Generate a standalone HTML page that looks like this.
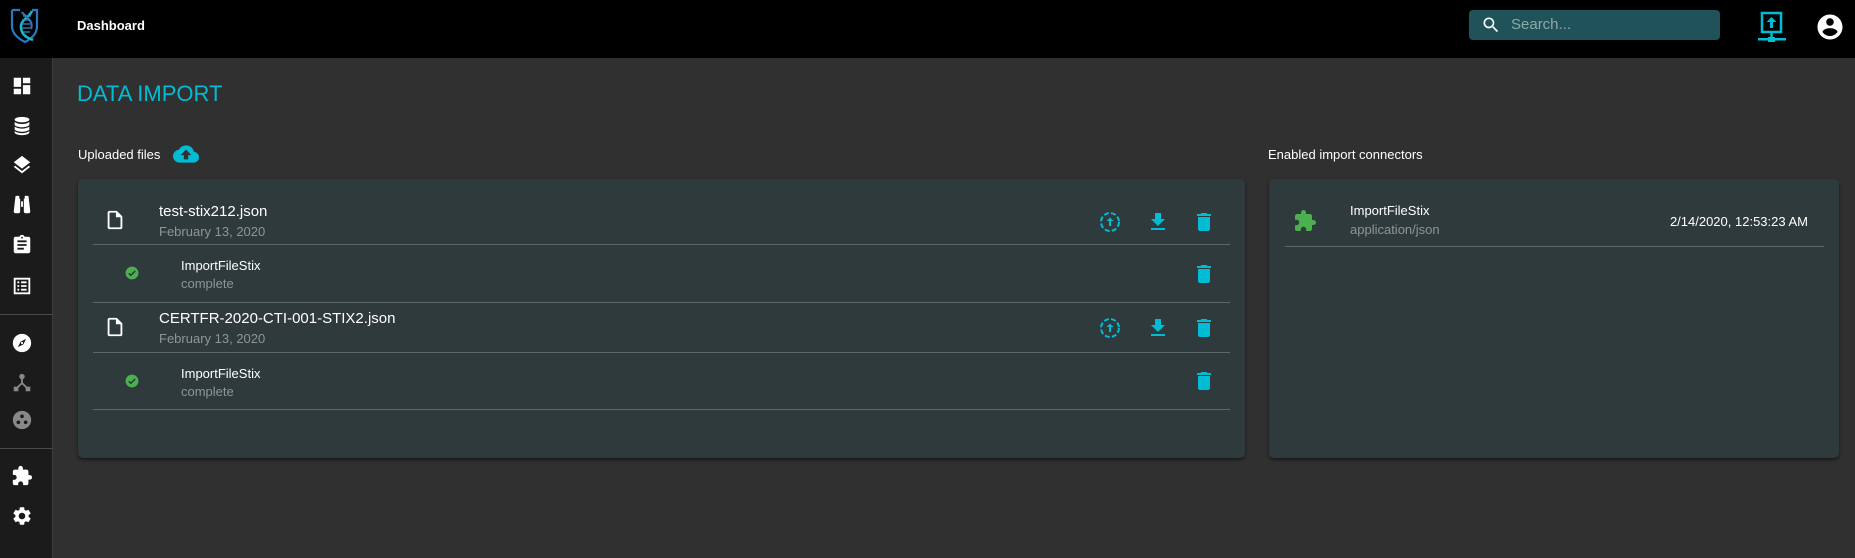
<!DOCTYPE html>
<html><head><meta charset="utf-8"><style>
*{margin:0;padding:0;box-sizing:border-box}
body{width:1855px;height:558px;overflow:hidden;background:#303030;font-family:"Liberation Sans",Arial,sans-serif;position:relative;color:#fff}
.a{position:absolute}
.hdr{left:0;top:0;width:1855px;height:58px;background:#000}
.side{left:0;top:58px;width:53px;height:500px;background:#1b1b1b;border-right:1px solid #3c3c3c}
.card{background:#2f3a3c;border-radius:5px;box-shadow:0 2px 3px rgba(0,0,0,.5)}
.hr{height:1px;background:#5e6668}
.t15{font-size:15px;color:#fff}
.t13{font-size:13px;color:#fff}
.g{color:#8e9597}
svg{position:absolute;display:block}
</style></head><body>
<div class="a hdr"></div>
<svg style="left:10px;top:8px" width="30" height="36" viewBox="0 0 30 36"><path d="M2 2h8M22 2h5v16c0 8-6 13-12 16C9 31 2 26 2 18V2" fill="none" stroke="#2a78c0" stroke-width="2.2"/><path d="M22 3c-3 7-12 9-11 17s7 10 12 12" fill="none" stroke="#1fb3c8" stroke-width="2.6"/><path d="M12 4c3 5 12 8 9 17" fill="none" stroke="#3a6cb4" stroke-width="2.2"/><path d="M13 8h8M12 12h8M12 16h8M12 20h8M13 24h7" stroke="#2a8fc8" stroke-width="1.2"/></svg>
<div class="a" style="left:77px;top:18px;font-size:13px;font-weight:bold">Dashboard</div>
<div class="a" style="left:1469px;top:10px;width:251px;height:30px;background:#1f5359;border-radius:4px"></div>
<svg style="left:1481px;top:15px" width="20" height="20" viewBox="0 0 24 24"><path fill="#fff" d="M15.5 14h-.79l-.28-.27A6.47 6.47 0 0016 9.5 6.5 6.5 0 109.5 16c1.61 0 3.09-.59 4.230-1.57l.27.28v.79l5 4.99L20.49 19l-4.99-5zm-6 0C7.01 14 5 11.99 5 9.5S7.01 5 9.5 5 14 7.010 14 9.5 11.99 14 9.5 14z"/></svg>
<div class="a" style="left:1511px;top:16px;font-size:15px;color:#8fa8aa">Search...</div>
<svg style="left:1756px;top:11px" width="32" height="34" viewBox="0 0 32 34"><rect x="6" y="2" width="19" height="19" fill="none" stroke="#00bcd4" stroke-width="2.5"/><path d="M15.5 6l-5 5h3.5v6h3v-6h3.5z" fill="#00bcd4"/><rect x="14.3" y="21" width="2.5" height="7" fill="#00bcd4"/><rect x="2" y="27" width="28" height="2.5" fill="#00bcd4"/><rect x="12" y="26" width="7" height="5" fill="#00bcd4"/></svg>
<svg style="left:1815px;top:12px" width="30" height="30" viewBox="0 0 24 24"><path fill="#fff" d="M12 2C6.48 2 2 6.48 2 12s4.48 10 10 10 10-4.48 10-10S17.52 2 12 2zm0 3c1.66 0 3 1.34 3 3s-1.34 3-3 3-3-1.34-3-3 1.34-3 3-3zm0 14.2c-2.5 0-4.71-1.28-6-3.220.03-1.99 4-3.08 6-3.08 1.99 0 5.97 1.09 6 3.08-1.29 1.94-3.5 3.22-6 3.22z"/></svg>

<div class="a side"></div>
<svg style="left:11px;top:75px" width="22" height="22" viewBox="0 0 24 24"><path fill="#fff" d="M3 13h8V3H3v10zm0 8h8v-6H3v6zm10 0h8V11h-8v10zm0-18v6h8V3h-8z"/></svg>
<svg style="left:11px;top:115px" width="22" height="22" viewBox="0 0 24 24"><ellipse cx="12" cy="5" rx="8" ry="3" fill="#fff"/><path fill="#fff" d="M4 7.5c1.5 1.5 4.5 2.3 8 2.3s6.5-.8 8-2.3V11c-1.5 1.5-4.5 2.3-8 2.3S5.5 12.5 4 11zm0 5c1.5 1.5 4.5 2.3 8 2.3s6.5-.8 8-2.3V16c-1.5 1.5-4.5 2.3-8 2.3S5.5 17.5 4 16zm0 5c1.5 1.5 4.5 2.3 8 2.3s6.5-.8 8-2.3V19c0 1.7-3.6 3-8 3s-8-1.3-8-3z"/></svg>
<svg style="left:11px;top:154px" width="22" height="22" viewBox="0 0 24 24"><path fill="#fff" d="M11.99 18.54l-7.37-5.73L3 14.07l9 7 9-7-1.63-1.27-7.38 5.74zM12 16l7.36-5.73L21 9l-9-7-9 7 1.63 1.27L12 16z"/></svg>
<svg style="left:11px;top:194px" width="22" height="22" viewBox="0 0 24 24"><path fill="#fff" d="M5 2h4v3h1v14a2 2 0 01-2 2H5a2 2 0 01-2-2l1-9zm10 0h4l1 8 1 9a2 2 0 01-2 2h-3a2 2 0 01-2-2V5h1zM11 8h2v6h-2z"/></svg>
<svg style="left:11px;top:234px" width="22" height="22" viewBox="0 0 24 24"><path fill="#fff" d="M19 3h-4.18C14.4 1.84 13.3 1 12 1s-2.4.84-2.82 2H5c-1.1 0-2 .9-2 2v14c0 1.1.9 2 2 2h14c1.1 0 2-.9 2-2V5c0-1.1-.9-2-2-2zm-7 0c.55 0 1 .45 1 1s-.45 1-1 1-1-.45-1-1 .45-1 1-1zm2 14H7v-2h7v2zm3-4H7v-2h10v2zm0-4H7V7h10v2z"/></svg>
<svg style="left:11px;top:275px" width="22" height="22" viewBox="0 0 24 24"><path fill="#fff" d="M3 3h18v18H3zm2 2v14h14V5zm2 2h2v2H7zm4 0h6v2h-6zm-4 4h2v2H7zm4 0h6v2h-6zm-4 4h2v2H7zm4 0h6v2h-6z"/></svg>
<div class="a" style="left:0;top:314px;width:53px;height:1px;background:#4a4a4a"></div>
<svg style="left:11px;top:332px" width="22" height="22" viewBox="0 0 24 24"><circle cx="12" cy="12" r="10" fill="#fff"/><path d="M16.5 7.5L13.5 13.5 7.5 16.5 10.5 10.5z" fill="#1b1b1b"/><circle cx="12" cy="12" r="1.2" fill="#fff"/></svg>
<svg style="left:11px;top:372px" width="22" height="22" viewBox="0 0 24 24"><circle cx="12" cy="5" r="3" fill="#888"/><path d="M12 7v5M12 12l-6 6M12 12l6 6" stroke="#888" stroke-width="2"/><rect x="3" y="16" width="5" height="5" fill="#888"/><rect x="16" y="16" width="5" height="5" fill="#888"/></svg>
<svg style="left:11px;top:409px" width="22" height="22" viewBox="0 0 24 24"><circle cx="12" cy="12" r="10" fill="#888"/><circle cx="12" cy="8" r="2" fill="#1b1b1b"/><circle cx="8" cy="14.5" r="2" fill="#1b1b1b"/><circle cx="16" cy="14.5" r="2" fill="#1b1b1b"/></svg>
<div class="a" style="left:0;top:448px;width:53px;height:1px;background:#4a4a4a"></div>
<svg style="left:11px;top:465px" width="22" height="22" viewBox="0 0 24 24"><path fill="#fff" d="M20.5 11H19V7c0-1.1-.9-2-2-2h-4V3.5a2.5 2.5 0 00-5 0V5H4c-1.1 0-1.99.9-1.99 2v3.8H3.5c1.49 0 2.7 1.21 2.7 2.7s-1.21 2.7-2.7 2.7H2V20c0 1.1.9 2 2 2h3.8v-1.5c0-1.49 1.21-2.7 2.7-2.7 1.49 0 2.7 1.21 2.7 2.7V22H17c1.1 0 2-.9 2-2v-4h1.5a2.5 2.5 0 000-5z"/></svg>
<svg style="left:11px;top:505px" width="22" height="22" viewBox="0 0 24 24"><path fill="#fff" d="M19.14 12.94c.04-.3.06-.61.06-.94 0-.32-.02-.64-.07-.94l2.03-1.58a.49.49 0 00.12-.61l-1.92-3.32a.488.488 0 00-.59-.22l-2.39.96c-.5-.38-1.03-.7-1.62-.94l-.36-2.54a.484.484 0 00-.48-.41h-3.84c-.24 0-.43.17-.47.41l-.36 2.54c-.59.24-1.13.57-1.62.94l-2.39-.96c-.22-.08-.47 0-.59.22L2.74 8.87c-.12.21-.08.47.12.61l2.03 1.58c-.05.3-.09.63-.09.94s.02.64.07.94l-2.03 1.58a.49.49 0 00-.12.61l1.92 3.32c.12.22.37.29.59.22l2.39-.96c.5.38 1.03.7 1.62.94l.36 2.54c.05.24.24.41.48.41h3.84c.24 0 .44-.17.47-.41l.36-2.54c.59-.24 1.13-.56 1.62-.94l2.39.96c.22.08.47 0 .59-.22l1.92-3.32c.12-.22.07-.47-.12-.61l-2.01-1.58zM12 15.6c-1.98 0-3.6-1.62-3.6-3.6s1.62-3.6 3.6-3.6 3.6 1.62 3.6 3.6-1.62 3.6-3.6 3.6z"/></svg>

<div class="a" style="left:77px;top:81px;font-size:22px;color:#00bcd4">DATA IMPORT</div>
<div class="a t13" style="left:78px;top:147px">Uploaded files</div>
<svg style="left:173px;top:143px" width="26" height="22" viewBox="0 0 24 20"><path fill="#00bcd4" d="M19.35 8.04A7.49 7.49 0 0012 2C9.11 2 6.6 3.64 5.35 6.04A5.994 5.994 0 000 12c0 3.31 2.69 6 6 6h13c2.76 0 5-2.24 5-5 0-2.64-2.05-4.78-4.65-4.96zM14 11v4h-4v-4H7l5-5 5 5h-3z"/></svg>
<div class="a t13" style="left:1268px;top:147px">Enabled import connectors</div>

<div class="a card" style="left:78px;top:179px;width:1167px;height:279px"></div>
<div class="a card" style="left:1269px;top:179px;width:570px;height:279px"></div>

<svg style="left:104px;top:209px" width="22" height="22" viewBox="0 0 24 24"><path fill="#fff" d="M14 2H6c-1.1 0-2 .9-2 2v16c0 1.1.9 2 2 2h12c1.1 0 2-.9 2-2V8l-6-6zM6 20V4h7v5h5v11H6z"/></svg>
<div class="a t15" style="left:159px;top:203px">test-stix212.json</div>
<div class="a t13 g" style="left:159px;top:224px">February 13, 2020</div>
<div class="a hr" style="left:93px;top:244px;width:1137px"></div>
<svg style="left:125px;top:266px" width="14" height="14" viewBox="0 0 24 24"><circle cx="12" cy="12" r="11" fill="#4caf50"/><path d="M6.5 12.5l3.5 3.5 7.5-7.5" stroke="#2f3a3c" stroke-width="2.6" fill="none"/></svg>
<div class="a t13" style="left:181px;top:258px">ImportFileStix</div>
<div class="a t13 g" style="left:181px;top:276px">complete</div>
<div class="a hr" style="left:93px;top:302px;width:1137px"></div>
<svg style="left:104px;top:316px" width="22" height="22" viewBox="0 0 24 24"><path fill="#fff" d="M14 2H6c-1.1 0-2 .9-2 2v16c0 1.1.9 2 2 2h12c1.1 0 2-.9 2-2V8l-6-6zM6 20V4h7v5h5v11H6z"/></svg>
<div class="a t15" style="left:159px;top:310px">CERTFR-2020-CTI-001-STIX2.json</div>
<div class="a t13 g" style="left:159px;top:331px">February 13, 2020</div>
<div class="a hr" style="left:93px;top:352px;width:1137px"></div>
<svg style="left:125px;top:374px" width="14" height="14" viewBox="0 0 24 24"><circle cx="12" cy="12" r="11" fill="#4caf50"/><path d="M6.5 12.5l3.5 3.5 7.5-7.5" stroke="#2f3a3c" stroke-width="2.6" fill="none"/></svg>
<div class="a t13" style="left:181px;top:366px">ImportFileStix</div>
<div class="a t13 g" style="left:181px;top:384px">complete</div>
<div class="a hr" style="left:93px;top:409px;width:1137px"></div>

<svg style="left:1098px;top:210px" width="24" height="24" viewBox="0 0 24 24"><circle cx="12" cy="12" r="9" fill="none" stroke="#00bcd4" stroke-width="2" stroke-dasharray="5 2.2"/><path d="M12 7.5l-3.5 3.5h2.5v5h2v-5h2.5z" fill="#00bcd4"/></svg>
<svg style="left:1146px;top:210px" width="24" height="24" viewBox="0 0 24 24"><path fill="#00bcd4" d="M19 9h-4V3H9v6H5l7 7 7-7zM5 18v2h14v-2H5z"/></svg>
<svg style="left:1192px;top:210px" width="24" height="24" viewBox="0 0 24 24"><path fill="#00bcd4" d="M6 19c0 1.1.9 2 2 2h8c1.1 0 2-.9 2-2V7H6v12zM19 4h-3.5l-1-1h-5l-1 1H5v2h14V4z"/></svg>
<svg style="left:1192px;top:262px" width="24" height="24" viewBox="0 0 24 24"><path fill="#00bcd4" d="M6 19c0 1.1.9 2 2 2h8c1.1 0 2-.9 2-2V7H6v12zM19 4h-3.5l-1-1h-5l-1 1H5v2h14V4z"/></svg>
<svg style="left:1098px;top:316px" width="24" height="24" viewBox="0 0 24 24"><circle cx="12" cy="12" r="9" fill="none" stroke="#00bcd4" stroke-width="2" stroke-dasharray="5 2.2"/><path d="M12 7.5l-3.5 3.5h2.5v5h2v-5h2.5z" fill="#00bcd4"/></svg>
<svg style="left:1146px;top:316px" width="24" height="24" viewBox="0 0 24 24"><path fill="#00bcd4" d="M19 9h-4V3H9v6H5l7 7 7-7zM5 18v2h14v-2H5z"/></svg>
<svg style="left:1192px;top:316px" width="24" height="24" viewBox="0 0 24 24"><path fill="#00bcd4" d="M6 19c0 1.1.9 2 2 2h8c1.1 0 2-.9 2-2V7H6v12zM19 4h-3.5l-1-1h-5l-1 1H5v2h14V4z"/></svg>
<svg style="left:1192px;top:369px" width="24" height="24" viewBox="0 0 24 24"><path fill="#00bcd4" d="M6 19c0 1.1.9 2 2 2h8c1.1 0 2-.9 2-2V7H6v12zM19 4h-3.5l-1-1h-5l-1 1H5v2h14V4z"/></svg>

<svg style="left:1293px;top:209px" width="24" height="24" viewBox="0 0 24 24"><path fill="#4caf50" d="M20.5 11H19V7c0-1.1-.9-2-2-2h-4V3.5a2.5 2.5 0 00-5 0V5H4c-1.1 0-1.99.9-1.99 2v3.8H3.5c1.49 0 2.7 1.21 2.7 2.7s-1.21 2.7-2.7 2.7H2V20c0 1.1.9 2 2 2h3.8v-1.5c0-1.49 1.21-2.7 2.7-2.7 1.49 0 2.7 1.21 2.7 2.7V22H17c1.1 0 2-.9 2-2v-4h1.5a2.5 2.5 0 000-5z"/></svg>
<div class="a t13" style="left:1350px;top:203px">ImportFileStix</div>
<div class="a t13 g" style="left:1350px;top:222px">application/json</div>
<div class="a t13" style="left:1600px;top:214px;width:208px;text-align:right">2/14/2020, 12:53:23 AM</div>
<div class="a hr" style="left:1285px;top:246px;width:539px"></div>
</body></html>
